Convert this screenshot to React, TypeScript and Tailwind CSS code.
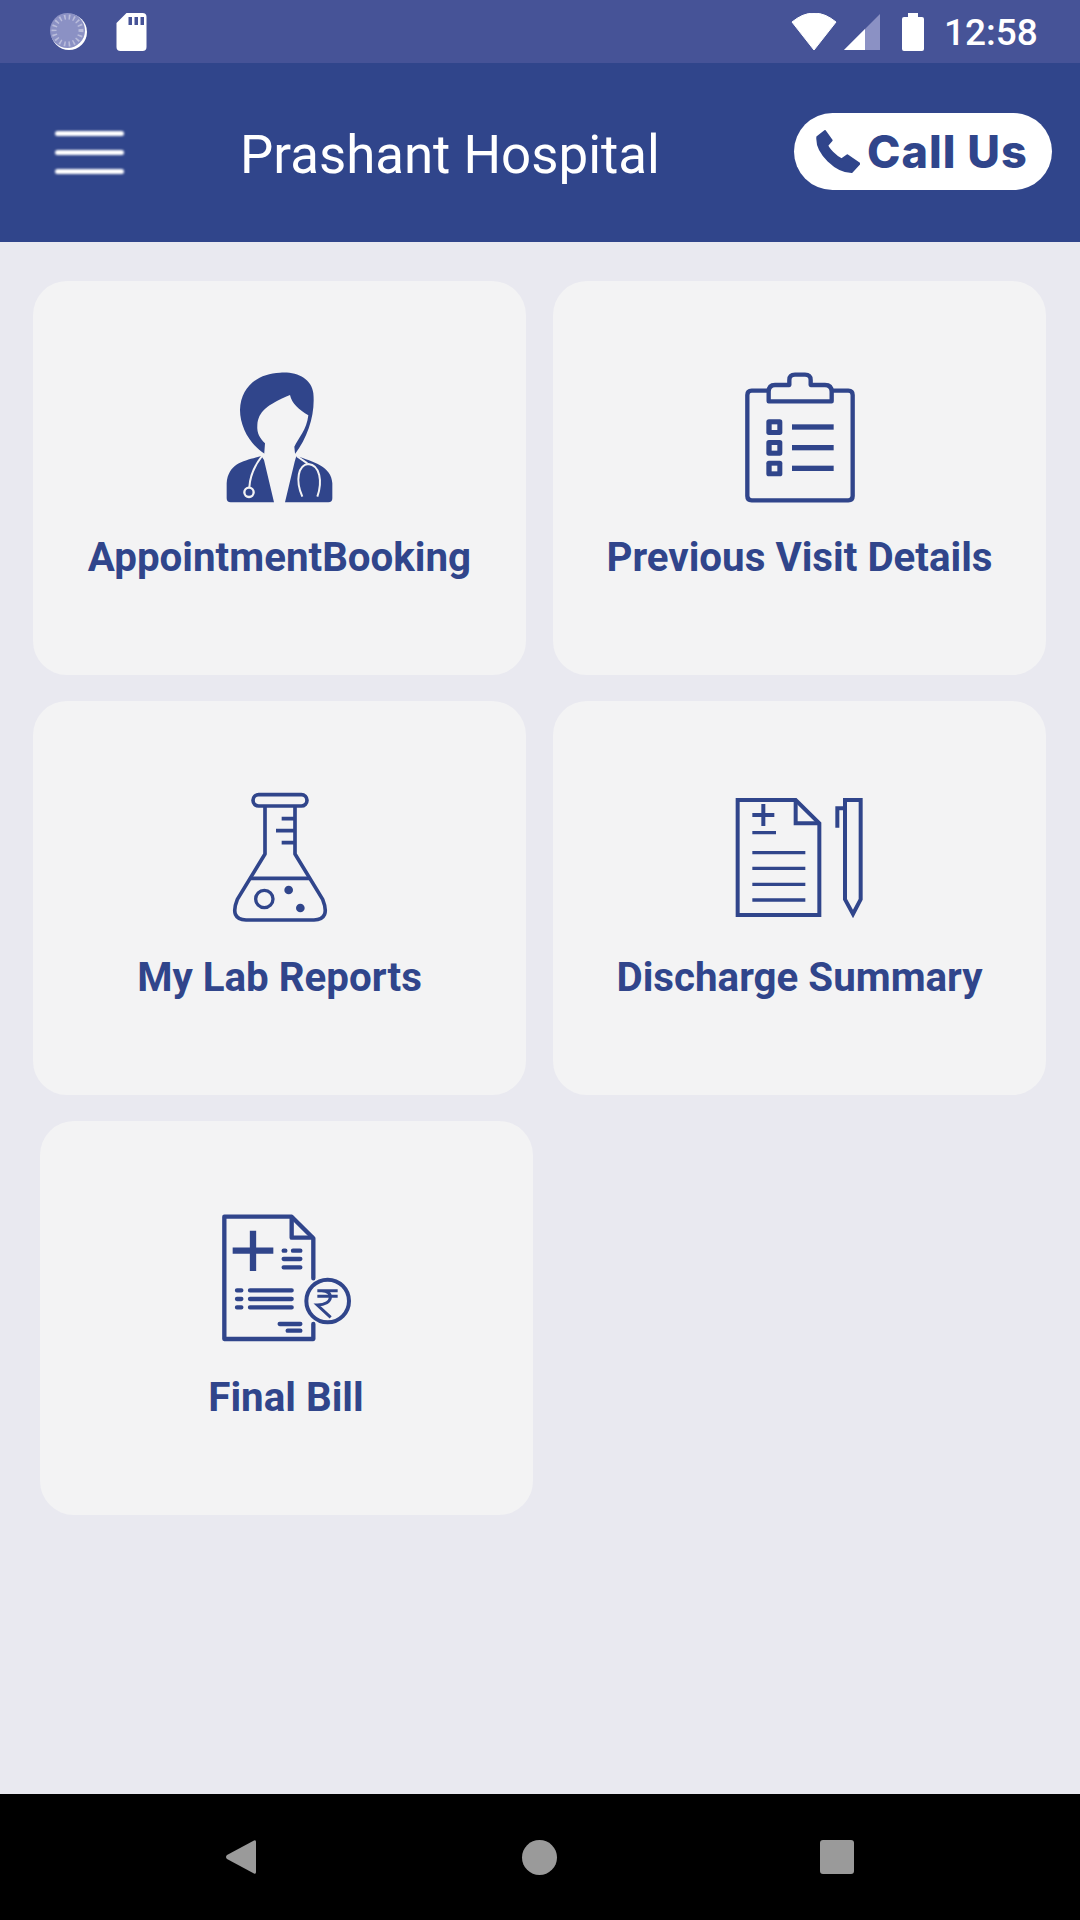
import React from "react";

const C = "#30458b";
const CARD = "#f3f3f4";

function IconBox({ children }: { children: React.ReactNode }) {
  return (
    <svg width="160" height="170" viewBox="0 0 480 510" className="block" fill="none">
      {children}
    </svg>
  );
}

const Doctor = () => (
  <IconBox>
    <path d="M240 68C290 64 335 85 340 130C346 190 325 260 285 312L195 312C150 285 120 230 120 180C122 110 175 70 240 68Z" fill={C} />
    <path d="M270 135C275 160 298 180 325 196C320 240 295 265 283 290L286 320L255 457L222 457L192 320L195 280C180 265 170 250 172 225C175 185 200 165 270 135Z" fill={CARD} />
    <path d="M184 318C140 332 85 335 80 400L80 445Q80 457 92 457L222 457L192 330Z" fill={C} />
    <path d="M289 318C340 335 395 350 397 400L397 445Q397 457 385 457L255 457L284 335Z" fill={C} />
    <path d="M186 318C165 345 150 375 148 412" stroke={CARD} strokeWidth="6" />
    <circle cx="147" cy="427" r="14" fill={C} stroke={CARD} strokeWidth="7" />
    <path d="M290 318L322 340M307 440C285 390 295 345 325 342C360 345 368 395 352 440" stroke={CARD} strokeWidth="6" />
  </IconBox>
);

const Clipboard = () => (
  <IconBox>
    <g stroke={C} strokeWidth="13" strokeLinejoin="round">
      <path d="M142 122L95 122Q82 122 82 135L82 438Q82 451 95 451L385 451Q398 451 398 438L398 135Q398 122 385 122L336 122" />
      <path d="M146 154L146 125Q146 105 165 105L208 105L208 90Q208 74 225 74L255 74Q272 74 272 90L272 105L315 105Q335 105 335 125L335 154Z" />
    </g>
    {[208, 270, 332].map((y) => (
      <g key={y}>
        <rect x="139" y={y} width="48" height="47" rx="8" fill={C} />
        <rect x="155" y={y + 15} width="17" height="17" fill={CARD} />
        <rect x="216" y={y + 15} width="125" height="16" fill={C} />
      </g>
    ))}
  </IconBox>
);

const Flask = () => (
  <IconBox>
    <g transform="translate(30 30)" stroke={C} strokeLinejoin="round">
      <rect x="129" y="44" width="162" height="34" rx="17" strokeWidth="11" />
      <path d="M165 78L165 222L82 358Q58 418 108 420L312 420Q362 418 338 358L255 222L255 78" strokeWidth="11" />
      <path d="M122 295L298 295M215 116L255 116M198 152L255 152M215 188L255 188" strokeWidth="11" />
      <circle cx="163" cy="357" r="26" strokeWidth="10" />
      <circle cx="236" cy="330" r="13" fill={C} stroke="none" />
      <circle cx="271" cy="384" r="13" fill={C} stroke="none" />
    </g>
  </IconBox>
);

const Discharge = () => (
  <IconBox>
    <g transform="translate(0 30)" stroke={C}>
      <path d="M53 60L227 60L298 130L298 405L53 405Z" strokeWidth="12" />
      <path d="M227 60L227 130L298 130" strokeWidth="12" />
      <path d="M97 105L163 105M130 72L130 138" strokeWidth="12" />
      <path d="M97 158L168 158M97 218L256 218M97 265L256 265M97 313L256 313M97 360L256 360" strokeWidth="10" />
      <path d="M375 60L422 60L422 358L399 402L375 358Z" strokeWidth="12" />
      <path d="M375 85L352 85L352 143" strokeWidth="12" />
    </g>
  </IconBox>
);

const Bill = () => (
  <IconBox>
    <g transform="translate(12 30)" stroke={C}>
      <path d="M310 235L310 115L245 50L43 50L43 417L310 417L310 372" strokeWidth="13" strokeLinejoin="round" strokeLinecap="round" />
      <path d="M245 50L245 113L310 113" strokeWidth="13" strokeLinejoin="round" />
      <path d="M68 152L190 152M129 92L129 213" strokeWidth="19" />
      <path
        d="M221 152L226 152M249 152L271 152M221 177L271 177M221 202L271 202M81 271L94 271M120 271L245 271M81 297L94 297M120 297L245 297M81 322L94 322M120 322L245 322M209 372L271 372M233 392L271 392"
        strokeWidth="13"
        strokeLinecap="round"
      />
      <circle cx="353" cy="303" r="64" strokeWidth="12" />
      <path d="M322 272L383 272M322 289L383 289M335 272C372 272 372 315 322 315L362 352" strokeWidth="9" />
    </g>
  </IconBox>
);

function Card({ label, icon, className }: { label: string; icon: React.ReactNode; className?: string }) {
  return (
    <div className={`flex h-[394px] w-[493px] flex-col items-center rounded-[34px] bg-[#f3f3f4] pt-[69px] ${className ?? ""}`}>
      {icon}
      <div className="mt-[14px] text-[40.3px] leading-[48px] font-bold text-[#30458b]">{label}</div>
    </div>
  );
}

export default function App() {
  return (
    <div className="flex h-[1920px] w-[1080px] flex-col bg-[#e9e9f0] font-['Roboto',sans-serif]">
      {/* status bar */}
      <div className="flex h-[63px] items-center bg-[#465397] text-white">
        <svg width="40" height="40" viewBox="0 0 40 40" className="ml-[49px]">
          <circle cx="20" cy="20" r="18" fill="#fff" />
          <circle cx="18.5" cy="18.5" r="17.5" fill="#8b91c4" />
          <circle cx="18.5" cy="18.5" r="13.5" fill="none" stroke="#b9bcdb" strokeWidth="5" strokeDasharray="1.6 3" />
        </svg>
        <svg width="31" height="38" viewBox="0 0 30 38" className="ml-[27px]">
          <path d="M10 0L26 0Q30 0 30 4L30 34Q30 38 26 38L4 38Q0 38 0 34L0 10Z" fill="#fff" />
          <path d="M12 4h3.5v8H12zM18 4h3.5v8H18zM24 4h3.5v8H24z" fill="#465397" />
        </svg>
        <svg width="46" height="38" viewBox="0 0 46 38" className="ml-[644px]">
          <path d="M1 9Q23 -9 45 9L23 37Z" fill="#fff" stroke="#fff" strokeWidth="1" strokeLinejoin="round" />
        </svg>
        <svg width="36" height="36" viewBox="0 0 36 36" className="ml-[7px]">
          <path d="M0 36L36 0L36 36Z" fill="#8b91c4" />
          <path d="M0 36L21 15L21 36Z" fill="#fff" />
        </svg>
        <svg width="22" height="38" viewBox="0 0 22 38" className="ml-[22px]">
          <path d="M6 0H16V4H20Q22 4 22 6V36Q22 38 20 38H2Q0 38 0 36V6Q0 4 2 4H6Z" fill="#fff" />
        </svg>
        <div className="mt-[2px] ml-[20px] text-[37px] leading-none font-medium">12:58</div>
      </div>
      {/* header */}
      <div className="flex h-[179px] items-center bg-[#30458b]">
        <div className="ml-[55px] flex w-[69px] flex-col gap-[14px]">
          <div className="h-[5px] rounded-full bg-white blur-[1px]" />
          <div className="h-[5px] rounded-full bg-white blur-[1px]" />
          <div className="h-[5px] rounded-full bg-white blur-[1px]" />
        </div>
        <div className="mt-[6px] ml-[116px] text-[52.8px] leading-none text-white">Prashant Hospital</div>
        <div className="mr-[28px] mb-[2px] ml-auto flex h-[77px] w-[258px] items-center rounded-full bg-white pl-[22px]">
          <svg width="44" height="44" viewBox="228 400 132 130">
            <path d="M255 402L232 420C228 470 290 525 335 525L358 500L322 475L305 487C285 478 265 455 262 445L275 430Z" fill={C} stroke={C} strokeWidth="6" strokeLinejoin="round" />
          </svg>
          <div className="ml-[7px] font-['Inter',sans-serif] text-[45px] leading-none font-extrabold tracking-[1px] text-[#30458b]">Call Us</div>
        </div>
      </div>
      {/* main */}
      <div className="flex flex-1 flex-col gap-[26px] pt-[39px] pl-[33px]">
        <div className="flex gap-[27px]">
          <Card label="AppointmentBooking" icon={<Doctor />} />
          <Card label="Previous Visit Details" icon={<Clipboard />} />
        </div>
        <div className="flex gap-[27px]">
          <Card label="My Lab Reports" icon={<Flask />} />
          <Card label="Discharge Summary" icon={<Discharge />} />
        </div>
        <Card label="Final Bill" icon={<Bill />} className="ml-[6.5px]" />
      </div>
      {/* nav */}
      <div className="flex h-[126px] items-center bg-black">
        <svg width="32" height="36" viewBox="0 0 32 36" className="ml-[225px]">
          <path d="M29 1.5Q31 0.5 31 3L31 33Q31 35.5 29 34.5L2 20Q0 18 2 16Z" fill="#9a9a9a" />
        </svg>
        <div className="ml-[265px] size-[35px] rounded-full bg-[#9a9a9a]" />
        <div className="ml-[263px] h-[34px] w-[34px] rounded-[3px] bg-[#9a9a9a]" />
      </div>
    </div>
  );
}
